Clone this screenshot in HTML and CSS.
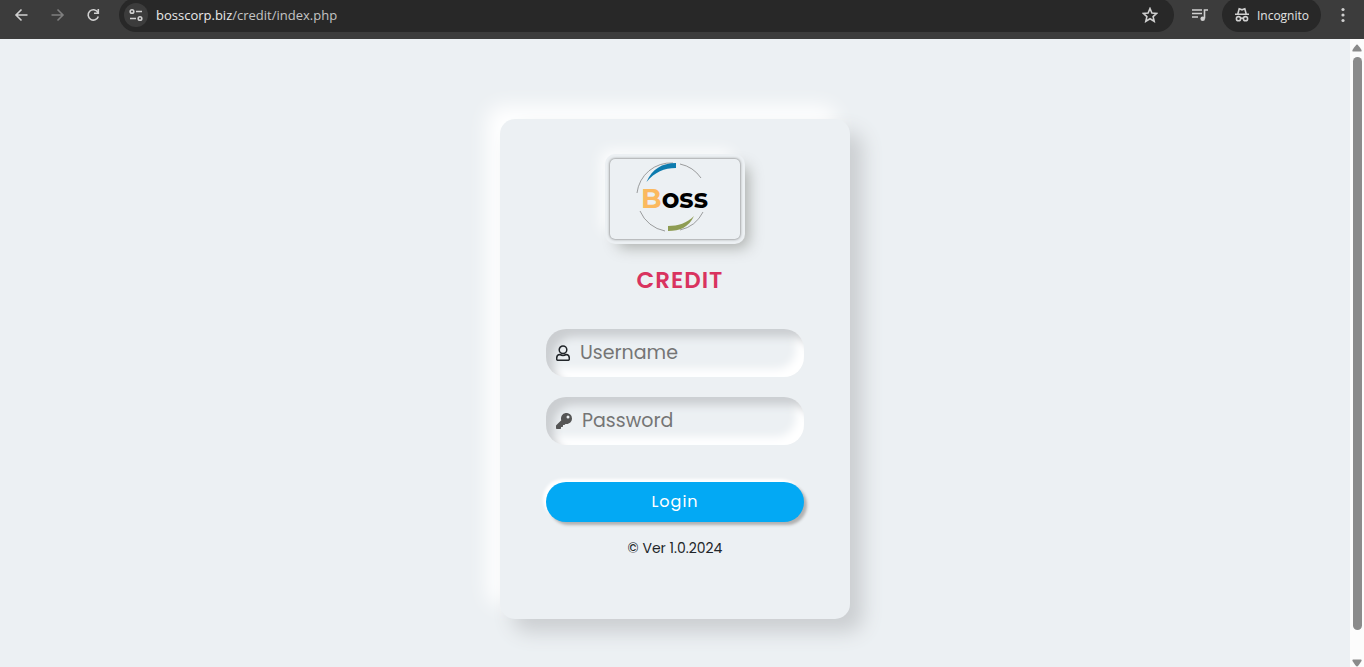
FILE: index.html
```
<!DOCTYPE html>
<html lang="en">
<head>
    <meta charset="UTF-8">
    <meta name="viewport" content="width=device-width, initial-scale=1.0">
    <title>Credit</title>
    <link rel="stylesheet" href="styles.css">
</head>
<body>
    <!-- Browser toolbar -->
    <header class="toolbar">
        <button class="tool-btn" type="button" aria-label="Back">
            <svg width="16" height="16" viewBox="0 0 16 16"><path d="M13.500 8H2.500M7.500 2.500L2 8L7.500 13.500"/></svg>
        </button>
        <button class="tool-btn disabled" type="button" aria-label="Forward" disabled>
            <svg width="16" height="16" viewBox="0 0 16 16"><path d="M1.500 8H12.500M7.500 2.500L13 8L7.500 13.500"/></svg>
        </button>
        <button class="tool-btn" type="button" aria-label="Reload">
            <svg width="16" height="16" viewBox="0 0 16 16"><path d="M11.800 5.200A5.200 5.200 0 1 0 12.300 9.500M12.300 2V6.200H8"/></svg>
        </button>
        <div class="address-bar">
            <button class="site-info" type="button" aria-label="Site information">
                <svg width="16" height="16" viewBox="0 0 16 16"><circle cx="4" cy="4.500" r="1.800"/><path d="M8 4.500H14M2 11.500H8"/><circle cx="12" cy="11.500" r="1.800"/></svg>
            </button>
            <span class="url">bosscorp.biz<span class="path">/credit/index.php</span></span>
            <button class="star" type="button" aria-label="Bookmark">
                <svg width="16" height="16" viewBox="0 0 16 16"><path d="M8 1.500L9.900 6L14.700 6.400L11.100 9.600L12.200 14.300L8 11.800L3.800 14.300L4.900 9.600L1.300 6.400L6.100 6Z"/></svg>
            </button>
        </div>
        <button class="tool-btn media" type="button" aria-label="Media">
            <svg width="18" height="16" viewBox="0 0 18 16"><path d="M1 3H11M1 6.500H11M1 10H7M13.500 11.500V3H17"/><circle class="solid" cx="11.700" cy="11.700" r="2.300"/></svg>
        </button>
        <button class="incognito" type="button">
            <svg width="16" height="16" viewBox="0 0 16 16"><path d="M1 7.300H15M3.800 7L5.200 1.800L8 2.800L10.800 1.800L12.200 7M6.500 11.500Q8 10.500 9.500 11.500"/><circle cx="4.500" cy="11.700" r="2.100"/><circle cx="11.500" cy="11.700" r="2.100"/></svg>
            Incognito
        </button>
        <button class="tool-btn" type="button" aria-label="Menu">
            <svg width="16" height="16" viewBox="0 0 16 16"><circle class="solid" cx="8" cy="2.500" r="1.600"/><circle class="solid" cx="8" cy="8" r="1.600"/><circle class="solid" cx="8" cy="13.500" r="1.600"/></svg>
        </button>
    </header>

    <div class="viewport">
        <main class="page">
            <div class="wrapper">
                <div class="logo">
                    <svg viewBox="0 0 130 80" role="img" aria-label="Boss">
                        <g class="ring">
                            <path d="M27 34A34 34 0 0 1 63 4"/>
                            <path d="M70 5A34 34 0 0 1 91 19"/>
                            <path d="M30 52A34 34 0 0 0 55 72"/>
                            <path d="M70 71A34 34 0 0 0 93 53"/>
                        </g>
                        <path class="blue" d="M36.500 23C42 10 52 4 66 4V9C54 9 45 13 36.500 23Z"/>
                        <path class="green" d="M84 57C79 68 70 72 58 72V67C68 67 77 64 84 57Z"/>
                        <text x="31" y="49"><tspan class="b">B</tspan>oss</text>
                    </svg>
                </div>
                <h1 class="name">CREDIT</h1>
                <form class="login-form">
                    <div class="form-field">
                        <label for="userName" aria-label="Username">
                            <svg width="14" height="16" viewBox="0 0 14 16"><circle cx="7" cy="4.800" r="3.800"/><path d="M3.800 9.500Q7 11.300 10.200 9.500C12.300 9.700 13.300 11 13.300 13V14Q13.300 15.300 12 15.300H2Q.700 15.300 .700 14V13C.700 11 1.700 9.700 3.800 9.500Z"/></svg>
                        </label>
                        <input type="text" name="userName" id="userName" placeholder="Username">
                    </div>
                    <div class="form-field">
                        <label for="pwd" aria-label="Password">
                            <svg class="key" width="16" height="16" viewBox="0 0 512 512"><path d="M512 177c0 97-79 176-176 176-11 0-22-1-33-3l-24 27a24 24 0 0 1-18 8h-37v40a24 24 0 0 1-24 24h-40v39a24 24 0 0 1-24 24H24a24 24 0 0 1-24-24v-78c0-6 3-12 7-17l162-162a176 176 0 1 1 343-54zM336 128a48 48 0 1 0 96 0 48 48 0 1 0-96 0z"/></svg>
                        </label>
                        <input type="password" name="password" id="pwd" placeholder="Password">
                    </div>
                    <button class="btn" type="submit">Login</button>
                </form>
                <p class="version">© Ver 1.0.2024</p>
            </div>
        </main>
        <!-- Scrollbar -->
        <div class="scrollbar">
            <svg width="10" height="8" viewBox="0 0 10 8"><path d="M5 0.500Q6 0.500 9.500 6Q10 7.500 9 7.500H1Q0 7.500 .500 6Q4 .500 5 .500Z"/></svg>
            <div class="thumb"></div>
            <svg width="10" height="8" viewBox="0 0 10 8"><path d="M5 7.500Q6 7.500 9.500 2Q10 .500 9 .500H1Q0 .500 .500 2Q4 7.500 5 7.500Z"/></svg>
        </div>
    </div>
</body>
</html>
```
FILE: styles.css
```
* {
    margin: 0;
    padding: 0;
    box-sizing: border-box;
}
body {
    display: flex;
    flex-direction: column;
    height: 100vh;
    overflow: hidden;
    background: #ecf0f3;
    font-family: Poppins, Inter, sans-serif;
}
button {
    border: none;
    background: none;
    cursor: pointer;
}

/* Browser toolbar */
.toolbar {
    display: flex;
    align-items: center;
    height: 39px;
    flex: none;
    padding: 0 13px 9px 4px;
    background: #3c3c3c;
    font-family: "Segoe UI", "Open Sans", sans-serif;
}
.toolbar svg {
    display: block;
    fill: none;
    stroke: #d0d0d0;
    stroke-width: 1.6;
}
.toolbar .solid {
    fill: #d0d0d0;
    stroke: none;
}
.tool-btn {
    display: flex;
    justify-content: center;
    flex: none;
    width: 36px;
}
.tool-btn:last-child {
    width: 16px;
}
.disabled {
    opacity: 0.45;
}
.media {
    width: 48px;
    padding-left: 4px;
}
.address-bar {
    display: flex;
    align-items: center;
    flex: 1;
    height: 34px;
    margin-left: 7px;
    padding: 0 16px 0 5px;
    border-radius: 17px;
    background: #282828;
}
.site-info {
    display: grid;
    place-items: center;
    width: 24px;
    height: 24px;
    border-radius: 50%;
    background: #3c3c3c;
}
.url {
    flex: 1;
    margin-left: 8px;
    color: #e8e8e8;
    font-size: 13px;
}
.path {
    color: #c4c4c4;
}
.incognito {
    display: flex;
    align-items: center;
    gap: 7px;
    height: 34px;
    margin-right: 14px;
    padding: 0 12px;
    border-radius: 17px;
    background: #282828;
    color: #e3e3e3;
    font-family: inherit;
    font-size: 12px;
}

/* Page area */
.viewport {
    display: flex;
    flex: 1;
    min-height: 0;
}
.page {
    flex: 1;
    overflow: hidden;
}
.wrapper {
    max-width: 350px;
    min-height: 500px;
    margin: 80px auto;
    padding: 40px 30px 30px;
    border-radius: 15px;
    background: #ecf0f3;
    box-shadow: 13px 13px 20px #cbced1, -13px -13px 20px #fff;
}
.logo {
    width: 130px;
    height: 80px;
    margin: auto;
    border-radius: 5px;
    box-shadow: 0 0 3px #5f5f5f, 0 0 0 5px #ecf0f3, 8px 8px 15px #a7aaa7, -8px -8px 15px #fff;
    background: #ecf0f3;
}
.logo svg {
    display: block;
    width: 100%;
}
.logo text {
    font-family: Montserrat, Inter, sans-serif;
    font-size: 27px;
    font-weight: 700;
}
.logo .b {
    fill: #fbb95f;
}
.ring {
    fill: none;
    stroke: #777;
    stroke-width: 0.7;
}
.blue {
    fill: #0d7bae;
}
.green {
    fill: #8e9c53;
}
.name {
    margin-top: 24px;
    padding-left: 10px;
    color: #d9335f;
    font-size: 23px;
    font-weight: 600;
    line-height: 34px;
    letter-spacing: 1px;
    text-align: center;
}

/* Form */
.login-form {
    padding: 32px 16px 0;
}
.form-field {
    display: flex;
    align-items: center;
    height: 48px;
    margin-bottom: 20px;
    padding-left: 10px;
    border-radius: 20px;
    box-shadow: inset 8px 8px 8px #cbced1, inset -8px -8px 8px #fff;
}
.form-field svg {
    display: block;
    fill: none;
    stroke: #212529;
    stroke-width: 1.5;
}
.form-field .key {
    fill: #555;
    stroke: none;
}
.form-field input {
    flex: 1;
    min-width: 0;
    padding: 9px 15px 11px 10px;
    border: none;
    outline: none;
    background: none;
    color: #666;
    font-family: inherit;
    font-size: 19px;
}
.form-field input::placeholder {
    color: #757575;
}
.btn {
    width: 100%;
    height: 40px;
    margin-top: 17px;
    padding-bottom: 2px;
    border-radius: 25px;
    background: #03a9f4;
    box-shadow: 3px 3px 3px #b1b1b1, -3px -3px 3px #fff;
    color: #fff;
    font-family: inherit;
    font-size: 16px;
    letter-spacing: 1px;
}
.btn:hover {
    background: #039be5;
}
.version {
    margin-top: 16px;
    color: #212529;
    font-size: 14px;
    line-height: 20px;
    text-align: center;
}

/* Scrollbar */
.scrollbar {
    display: flex;
    flex-direction: column;
    align-items: center;
    gap: 5px;
    width: 14px;
    padding-top: 5px;
    background: #fcfcfc;
}
.scrollbar svg {
    display: block;
    flex: none;
    fill: #8b8b8b;
}
.thumb {
    flex: 1;
    width: 9px;
    margin-bottom: 24px;
    border-radius: 5px;
    background: #8b8b8b;
}
```
